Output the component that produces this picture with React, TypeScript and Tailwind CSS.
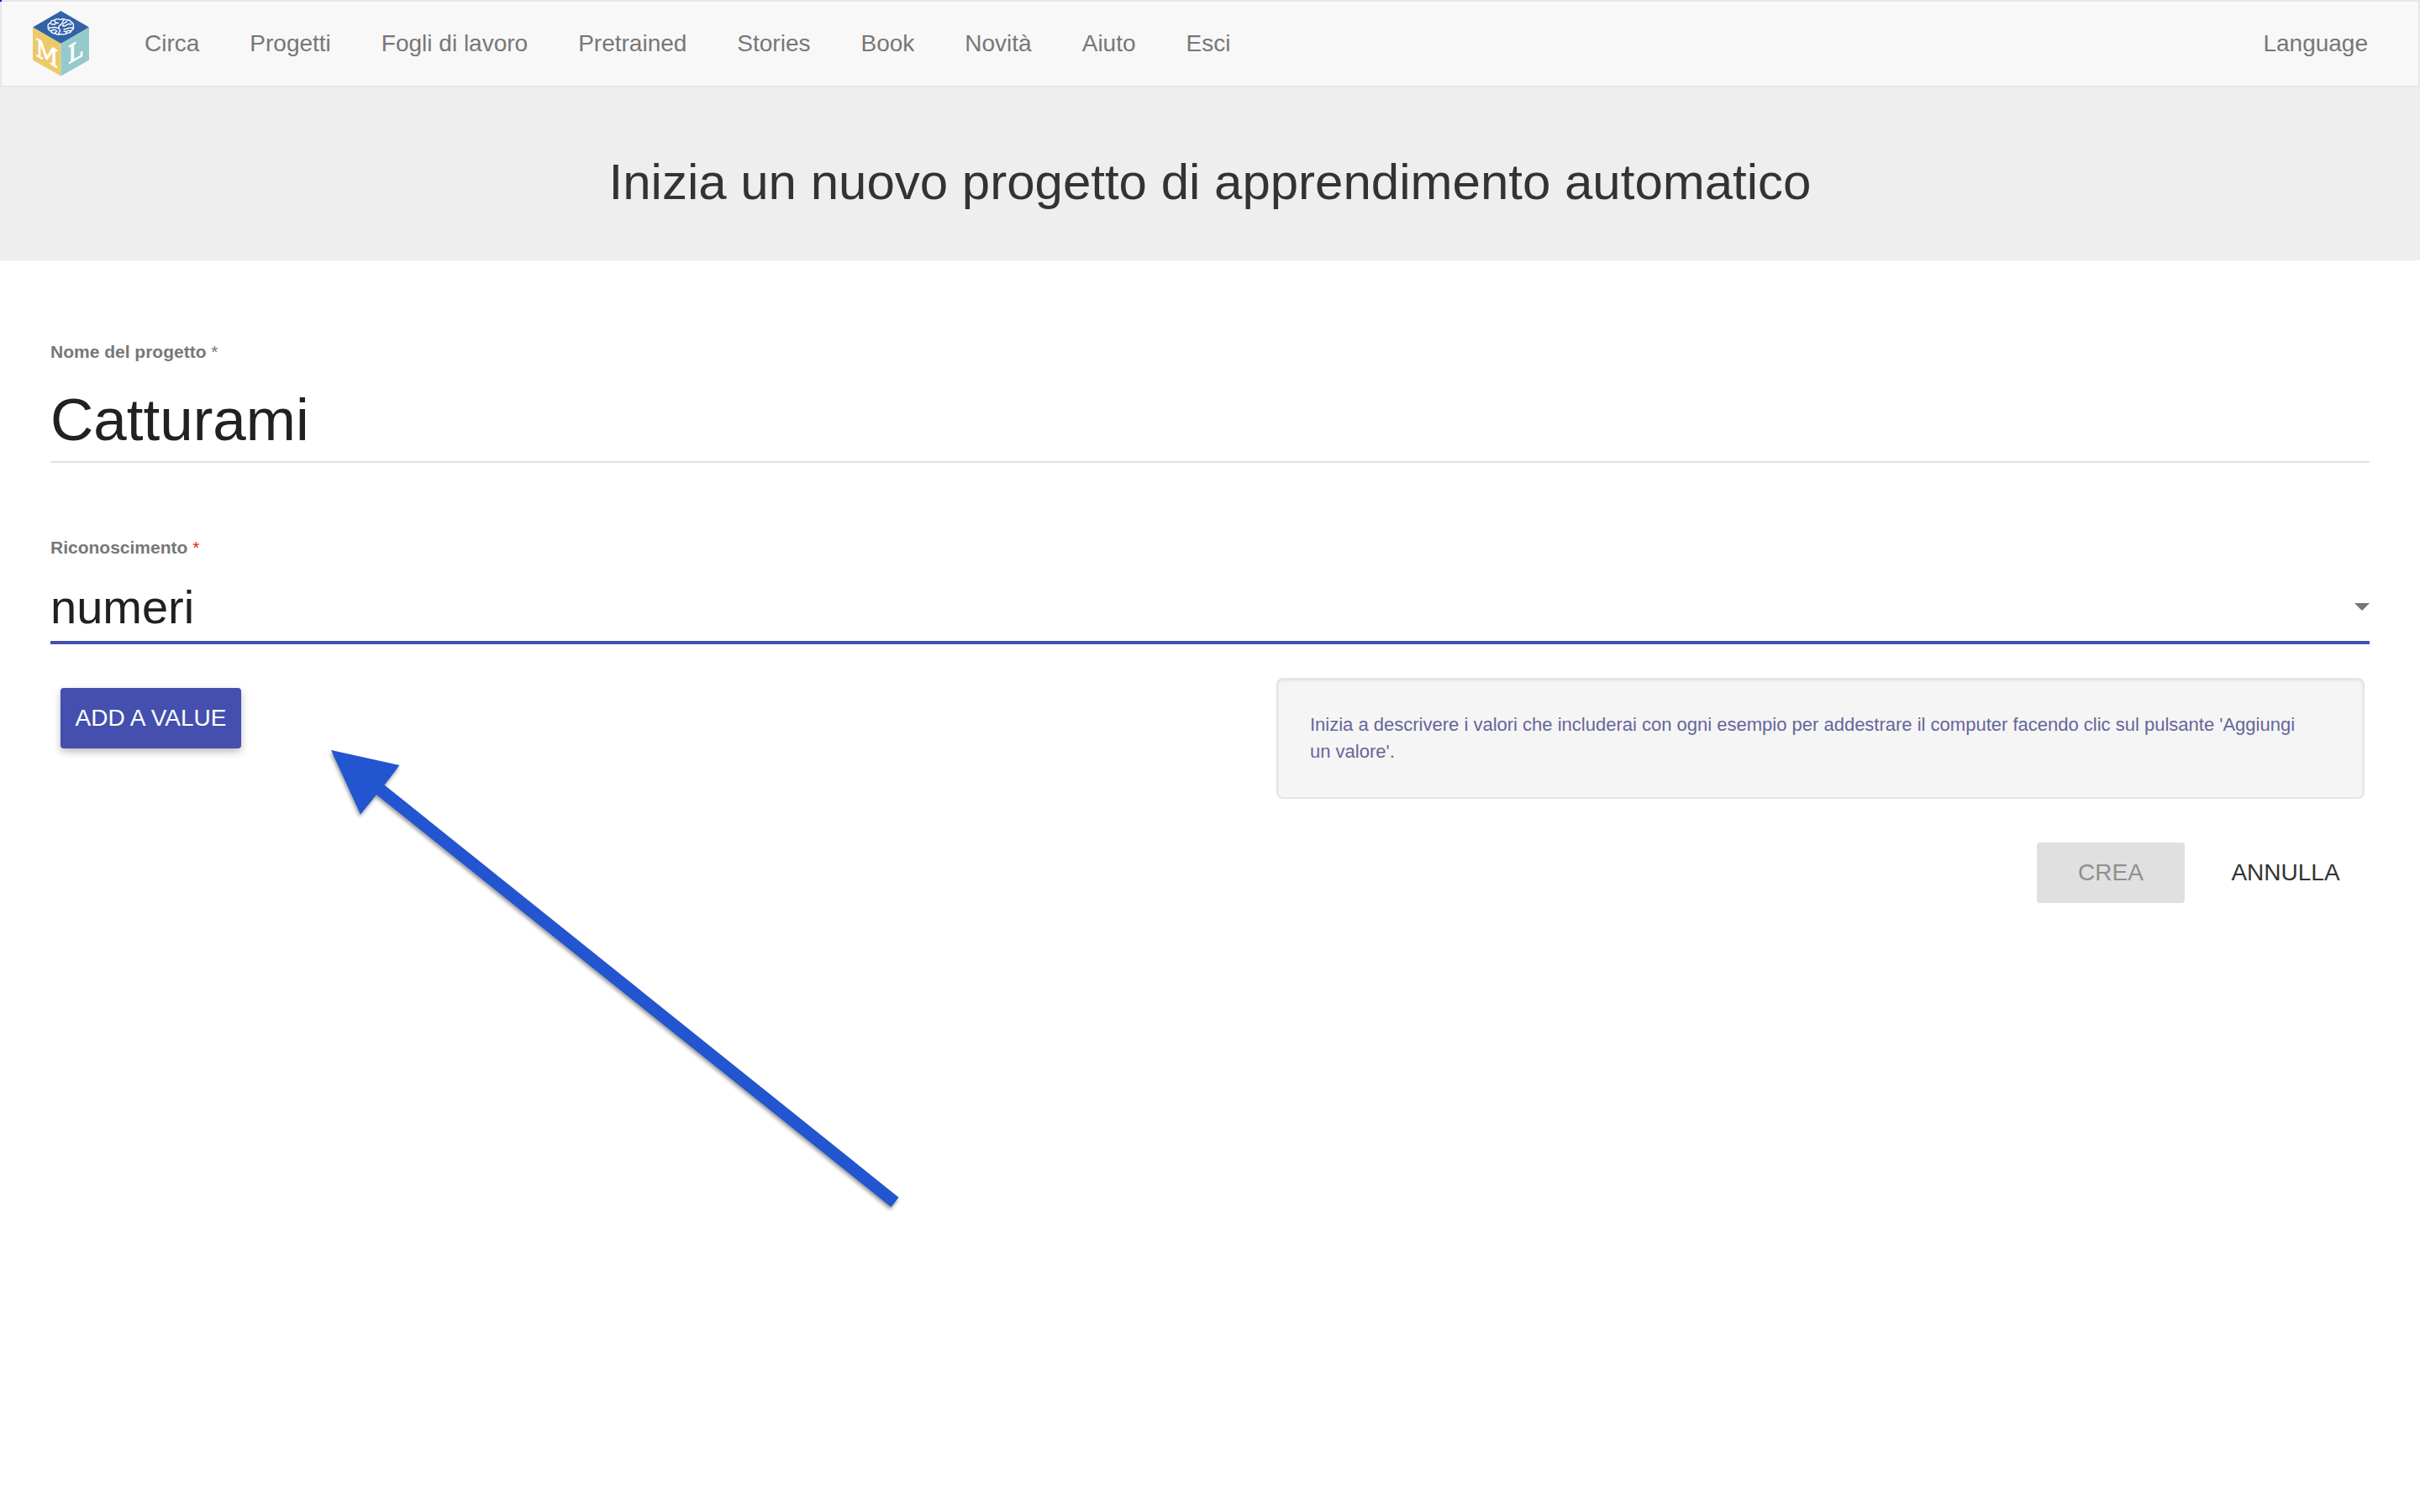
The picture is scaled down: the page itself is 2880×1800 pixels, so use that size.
import React from "react";

const navItems = [
  "Circa",
  "Progetti",
  "Fogli di lavoro",
  "Pretrained",
  "Stories",
  "Book",
  "Novità",
  "Aiuto",
  "Esci",
];

function Logo() {
  return (
    <svg width="68" height="78" viewBox="0 0 68 78" role="img" aria-label="ML">
      <polygon points="33.5,0 67,19.5 33.5,39 0,19.5" fill="#3263a7" />
      <polygon points="0,19.5 33.5,39 33.5,77.5 0,58.5" fill="#ecca69" />
      <polygon points="67,19.5 33.5,39 33.5,77.5 67,58.5" fill="#95c9cb" />
      <g fill="none" stroke="#fff" strokeWidth="1.4" strokeLinecap="round" strokeLinejoin="round">
        <path d="M33 10.500c-3-1.600-6-.9-7 .6-3-.2-5 1.300-4.700 3-2.600 1-3.900 3-2.900 4.700-1 2 .6 4.300 2.900 4.800.4 2 3.300 3.600 5.700 3.100 1.500 1.700 4.800 2 6.800.7 2.500 1.200 5.800.5 7-1 3 .2 5.300-1.600 5.200-3.400 2.500-1 3.300-3 2.200-4.700.9-2-.3-4.300-2.500-4.800-.4-2-3.300-3.100-5.700-2.600-1.500-1.700-5-1.700-7-.4z" />
        <path d="M37.500 10.300c-3 2.200-1 4.200-4 5.900s-3.500 4.300-1.500 5.800-1 3-1.500 5.700" />
        <path d="M26 11.800c.5 2.300 2 2.900 4.500 2.600M21.500 15.200c2 1.500 3.500 1 5.500.3M19.500 20c2.500.8 4-.8 6.500-.5s3 1.500 5 1M22 24.300c1-2 3-2 5-1.500M27 27c-.2-1.600.5-2.500 2-3.200" />
        <path d="M40.500 12.500c-1 1.500-3.500 1.500-4.500 3.500M45.800 16c-2-.8-4.500-.5-6 1s-3 1.200-4.500.5M48 20c-2 .8-4-.5-6 .5s-2.500 2-5 1M45 24.300c-1.200-1.300-3-1-4.500 0M40 27c.3-1.500-1-2.700-3-2.700" />
      </g>
      <g
        fill="#fff"
        stroke="#fff"
        strokeWidth="0.9"
        fontFamily="'DejaVu Serif Condensed', 'DejaVu Serif', serif"
        fontSize="29"
      >
        <text transform="matrix(1 0.58 0 1 3.500 53)">M</text>
        <text transform="matrix(1 -0.58 0 1 42 63.500)">L</text>
      </g>
    </svg>
  );
}

function Arrow() {
  return (
    <svg
      className="pointer-events-none absolute left-[384px] top-[883px] overflow-visible"
      width="700"
      height="570"
      viewBox="384 883 700 570"
      aria-hidden="true"
    >
      <polygon
        className="drop-shadow-[-1px_3px_2px_rgba(0,0,0,0.4)]"
        points="394,893 475.500,911 457.500,934.500 1069.500,1425.500 1060.500,1437 448,946 429,969.500"
        fill="#2255cf"
      />
    </svg>
  );
}

export default function App() {
  return (
    <div className="relative min-h-screen bg-white font-['Liberation_Sans',Arial,sans-serif] text-[28px] text-[#333]">
      <span className="absolute left-0 top-0 size-0.5 bg-[#0000ff]" />

      <header className="flex h-[104px] items-center border-2 border-[#e7e7e7] bg-[#f8f8f8] pl-[37px] pr-[60px] leading-10 text-[#777]">
        <a href="#" className="mr-[65px]">
          <Logo />
        </a>
        <nav className="flex flex-1 gap-[60px]">
          {navItems.map((item) => (
            <a key={item} href="#">
              {item}
            </a>
          ))}
        </nav>
        <a href="#">Language</a>
      </header>

      <section className="bg-[#eee] px-[60px] pb-[60px] pt-20 text-center">
        <h1 className="text-[60px] leading-[66px]">Inizia un nuovo progetto di apprendimento automatico</h1>
      </section>

      <form className="px-[60px] pt-[95px]" onSubmit={(e) => e.preventDefault()}>
        <div>
          <label htmlFor="name" className="block text-[21px] font-bold leading-7 text-[#777]">
            Nome del progetto <span className="font-normal">*</span>
          </label>
          <input
            id="name"
            type="text"
            defaultValue="Catturami"
            className="mt-7 block h-[90px] w-full border-b-2 border-[#e0e0e0] pb-2.5 text-[71px] text-[#212121] outline-none"
          />
        </div>

        <div className="mt-[87px]">
          <label htmlFor="type" className="block text-[21px] font-bold leading-7 text-[#777]">
            Riconoscimento <span className="font-normal text-[#dd2c00]">*</span>
          </label>
          <div className="relative mt-[25px]">
            <select
              id="type"
              defaultValue="numeri"
              className="block h-[76px] w-full appearance-none border-b-4 border-[#444fb0] pb-2 text-[56px] leading-16 text-[#212121] outline-none"
            >
              <option>testo</option>
              <option>immagini</option>
              <option>numeri</option>
              <option>suoni</option>
            </select>
            <svg
              className="pointer-events-none absolute right-0 top-[27px]"
              width="18"
              height="9"
              viewBox="0 0 18 9"
              aria-hidden="true"
            >
              <path d="M0 0h18L9 9z" fill="#757575" />
            </svg>
          </div>
        </div>

        <div className="mt-10 flex items-start justify-between pl-3 pr-1.5">
          <button
            type="button"
            className="mt-3 h-[72px] min-w-[215px] rounded bg-[#444fae] px-4 leading-[72px] text-white shadow-[0_4px_10px_rgba(0,0,0,0.26)]"
          >
            ADD A VALUE
          </button>
          <p className="w-[1295px] max-w-[48%] rounded-lg border-2 border-[#e3e3e3] bg-[#f5f5f5] py-[38px] pl-[38px] pr-14 text-[22px] leading-8 text-[#666699] shadow-[inset_0_2px_3px_rgba(0,0,0,0.06)]">
            Inizia a descrivere i valori che includerai con ogni esempio per addestrare il computer facendo clic sul
            pulsante 'Aggiungi un valore'.
          </p>
        </div>

        <div className="mt-[52px] flex justify-end gap-8 pr-3 leading-[72px]">
          <button type="submit" disabled className="h-[72px] w-44 rounded bg-[#e0e0e0] text-[#8f8f8f]">
            CREA
          </button>
          <button type="button" className="h-[72px] w-44 rounded">
            ANNULLA
          </button>
        </div>
      </form>

      <Arrow />
    </div>
  );
}
